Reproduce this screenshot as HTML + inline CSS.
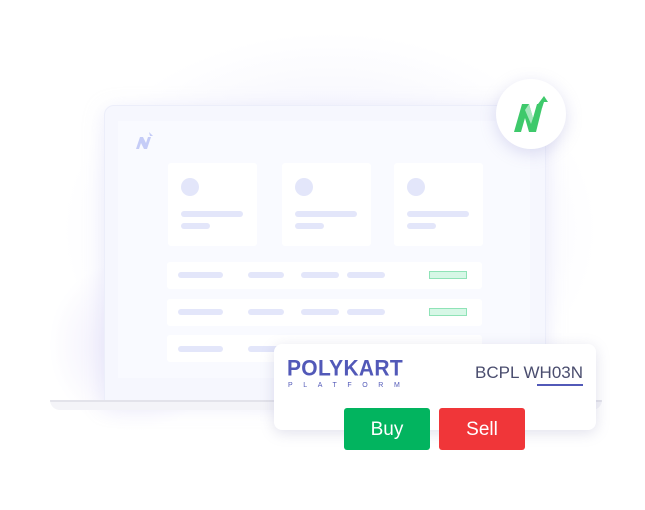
<!DOCTYPE html>
<html><head><meta charset="utf-8"><style>
*{margin:0;padding:0;box-sizing:border-box}
body{width:645px;height:510px;overflow:hidden;background:#fff;position:relative;font-family:"Liberation Sans",sans-serif}
.a{position:absolute}
.p{position:absolute;background:#e3e6fa;border-radius:4px;height:6px}
.card{position:absolute;background:#fff;width:89px;height:83px;top:163px;border-radius:3px}
.row{position:absolute;left:167px;width:315px;height:27px;background:#fff;border-radius:3px}
.g{position:absolute;left:262px;top:9px;width:38px;height:8px;background:#d6f7e6;border:1px solid #8fe3b7}
</style></head><body>
<div class="a" style="left:60px;top:30px;width:540px;height:400px;border-radius:50%;background:radial-gradient(ellipse at center,#f3f3fc 0%,#f8f8fe 45%,rgba(255,255,255,0) 70%)"></div>
<div class="a" style="left:50px;top:250px;width:170px;height:190px;border-radius:50%;background:radial-gradient(circle,#ece9fb 0%,rgba(255,255,255,0) 68%)"></div>
<div class="a" style="left:104px;top:105px;width:442px;height:297px;background:#f6f7fe;border:1px solid #eceefa;border-radius:10px 10px 0 0;box-shadow:0 4px 20px rgba(200,200,240,.35)"></div>
<div class="a" style="left:118px;top:121px;width:412px;height:257px;background:#f9faff"></div>
<div class="a" style="left:50px;top:400px;width:552px;height:10px;background:#f4f4f8;border-top:2px solid #e3e3ea;border-radius:0 0 30px 30px"></div>
<svg class="a" style="left:135px;top:131px" width="20" height="20" viewBox="0 0 20 20"><path d="M1 18 L5 6 L8 6 L11 12 L13 6 L16 6 L12 18 L9 18 L6 12 L4 18Z" fill="#c5ccf7"/><path d="M14 1 L18 5 L15 5Z" fill="#c5ccf7"/></svg>
<div class="card" style="left:168px"><div class="a" style="left:13px;top:15px;width:18px;height:18px;border-radius:50%;background:#e3e6fa"></div><div class="p" style="left:13px;top:48px;width:62px"></div><div class="p" style="left:13px;top:60px;width:29px"></div></div>
<div class="card" style="left:282px"><div class="a" style="left:13px;top:15px;width:18px;height:18px;border-radius:50%;background:#e3e6fa"></div><div class="p" style="left:13px;top:48px;width:62px"></div><div class="p" style="left:13px;top:60px;width:29px"></div></div>
<div class="card" style="left:394px"><div class="a" style="left:13px;top:15px;width:18px;height:18px;border-radius:50%;background:#e3e6fa"></div><div class="p" style="left:13px;top:48px;width:62px"></div><div class="p" style="left:13px;top:60px;width:29px"></div></div>
<div class="row" style="top:262px"><div class="p" style="left:11px;top:10px;width:45px"></div><div class="p" style="left:81px;top:10px;width:36px"></div><div class="p" style="left:134px;top:10px;width:38px"></div><div class="p" style="left:180px;top:10px;width:38px"></div><div class="g"></div></div>
<div class="row" style="top:299px"><div class="p" style="left:11px;top:10px;width:45px"></div><div class="p" style="left:81px;top:10px;width:36px"></div><div class="p" style="left:134px;top:10px;width:38px"></div><div class="p" style="left:180px;top:10px;width:38px"></div><div class="g"></div></div>
<div class="row" style="top:335px"><div class="p" style="left:11px;top:11px;width:45px"></div><div class="p" style="left:81px;top:11px;width:36px"></div></div>
<div class="a" style="left:496px;top:79px;width:70px;height:70px;border-radius:50%;background:#fff;box-shadow:0 4px 16px rgba(150,150,210,.3)"></div>
<svg class="a" style="left:512px;top:94px" width="40" height="40" viewBox="0 0 40 40"><path d="M2 38 L10 10 L17 10 L21 24 L25 10 L31 10 L24 38 L17 38 L13 24 L9 38Z" fill="#3ec96b"/><path d="M17 10 L21 24 L19 30 L13 16Z" fill="#a6e6bd"/><path d="M26 10 L32 2 L36 8 L32 8 L30 14Z" fill="#3ec96b"/></svg>
<div class="a" style="left:274px;top:344px;width:322px;height:86px;background:#fff;border-radius:8px;box-shadow:0 3px 14px rgba(120,120,170,.22)"></div>
<div class="a" style="left:287px;top:357px;font-size:21px;font-weight:bold;color:#5259b8;letter-spacing:0.3px;transform:scaleY(1.05)">POLYKART</div>
<div class="a" style="left:288px;top:382px;font-size:7px;color:#5259b8;letter-spacing:10.6px">PLATFORM</div>
<div class="a" style="left:475px;top:363px;font-size:17px;color:#4a4d6e">BCPL WH03N</div>
<div class="a" style="left:537px;top:384px;width:46px;height:2px;background:#5259b8"></div>
<div class="a" style="left:344px;top:408px;width:86px;height:42px;background:#02b45f;border-radius:3px;color:#fff;font-size:19px;text-align:center;line-height:44px">Buy</div>
<div class="a" style="left:439px;top:408px;width:86px;height:42px;background:#f03639;border-radius:3px;color:#fff;font-size:19px;text-align:center;line-height:44px">Sell</div>
</body></html>
